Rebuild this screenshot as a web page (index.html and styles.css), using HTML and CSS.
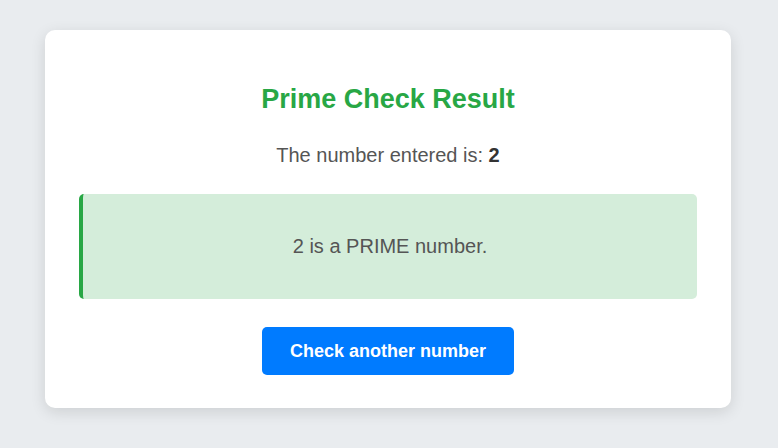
FILE: index.html
```html
<!DOCTYPE html>
<html>
<head>
<meta charset="utf-8">
<link rel="stylesheet" href="styles.css">
</head>
<body>
<div class="card">
  <h2 class="title">Prime Check Result</h2>
  <p class="entered">The number entered is: <strong>2</strong></p>
  <div class="result">2 is a PRIME number.</div>
  <a class="btn" href="#">Check another number</a>
</div>
</body>
</html>
```
FILE: styles.css
```css
html, body {
  margin: 0;
  padding: 0;
}
body {
  background: #e9ecef;
  font-family: "Liberation Sans", Arial, sans-serif;
  display: flex;
  justify-content: center;
  padding: 30px 2px 0 0;
  min-height: 448px;
  box-sizing: border-box;
}
.card {
  width: 686px;
  box-sizing: border-box;
  background: #fff;
  border-radius: 10px;
  box-shadow: 0 4px 15px rgba(0, 0, 0, 0.12);
  padding: 30px 34px 33px;
  text-align: center;
  align-self: flex-start;
}
.title {
  color: #28a745;
  font-size: 27px;
  line-height: 31px;
  font-weight: bold;
  margin: 24px 0 0;
}
.entered {
  color: #555;
  font-size: 20px;
  line-height: 23px;
  margin: 29px 0 27px;
}
.entered strong {
  color: #333;
}
.result {
  background: #d4edda;
  border-left: 4px solid #28a745;
  border-radius: 5px;
  color: #555;
  font-size: 20px;
  line-height: 23px;
  padding: 40.5px 20px 41px;
}
.btn {
  display: inline-block;
  margin-top: 28.5px;
  width: 252px;
  height: 48px;
  line-height: 48px;
  box-sizing: border-box;
  background: #007bff;
  color: #fff;
  font-weight: bold;
  font-size: 18px;
  text-decoration: none;
  border-radius: 5px;
  vertical-align: top;
}
```
